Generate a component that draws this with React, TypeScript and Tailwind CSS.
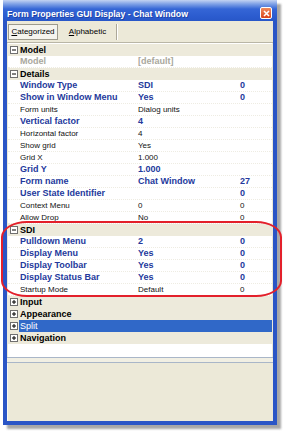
import React from "react";

type Row =
  | { kind: "cat"; label: string; open: boolean; selected?: boolean }
  | { kind: "prop"; name: string; value: string; extra?: string; tone: "blue" | "normal" | "gray" };

const rows: Row[] = [
  { kind: "cat", label: "Model", open: true },
  { kind: "prop", name: "Model", value: "[default]", tone: "gray" },
  { kind: "cat", label: "Details", open: true },
  { kind: "prop", name: "Window Type", value: "SDI", extra: "0", tone: "blue" },
  { kind: "prop", name: "Show in Window Menu", value: "Yes", extra: "0", tone: "blue" },
  { kind: "prop", name: "Form units", value: "Dialog units", tone: "normal" },
  { kind: "prop", name: "Vertical factor", value: "4", tone: "blue" },
  { kind: "prop", name: "Horizontal factor", value: "4", tone: "normal" },
  { kind: "prop", name: "Show grid", value: "Yes", tone: "normal" },
  { kind: "prop", name: "Grid X", value: "1.000", tone: "normal" },
  { kind: "prop", name: "Grid Y", value: "1.000", tone: "blue" },
  { kind: "prop", name: "Form name", value: "Chat Window", extra: "27", tone: "blue" },
  { kind: "prop", name: "User State Identifier", value: "", extra: "0", tone: "blue" },
  { kind: "prop", name: "Context Menu", value: "0", extra: "0", tone: "normal" },
  { kind: "prop", name: "Allow Drop", value: "No", extra: "0", tone: "normal" },
  { kind: "cat", label: "SDI", open: true },
  { kind: "prop", name: "Pulldown Menu", value: "2", extra: "0", tone: "blue" },
  { kind: "prop", name: "Display Menu", value: "Yes", extra: "0", tone: "blue" },
  { kind: "prop", name: "Display Toolbar", value: "Yes", extra: "0", tone: "blue" },
  { kind: "prop", name: "Display Status Bar", value: "Yes", extra: "0", tone: "blue" },
  { kind: "prop", name: "Startup Mode", value: "Default", extra: "0", tone: "normal" },
  { kind: "cat", label: "Input", open: false },
  { kind: "cat", label: "Appearance", open: false },
  { kind: "cat", label: "Split", open: false, selected: true },
  { kind: "cat", label: "Navigation", open: false },
];

function ExpandBox({ open }: { open: boolean }) {
  return (
    <svg width="8" height="8" viewBox="0 0 8 8" className="block">
      <rect x="0.5" y="0.5" width="7" height="7" fill="#ffffff" stroke="#6f6f6f" />
      <line x1="2" y1="4" x2="6" y2="4" stroke="#000" strokeWidth="1" />
      {!open && <line x1="4" y1="2" x2="4" y2="6" stroke="#000" strokeWidth="1" />}
    </svg>
  );
}

function toneClass(t: "blue" | "normal" | "gray") {
  if (t === "blue") return "text-[#24399c] font-bold text-[9px]";
  if (t === "gray") return "text-[#a9a79d] font-bold text-[9px]";
  return "text-[#111111] text-[8px]";
}

export default function App() {
  return (
    <div className="relative w-[283px] h-[435px] bg-white overflow-hidden font-['Liberation_Sans',Arial,sans-serif]">
      <div className="pl-[3px]">
        <div className="w-[274px] h-[425px] flex flex-col bg-[#2a55c6] shadow-[4px_4px_2px_rgba(60,60,60,0.45)]">
          {/* Title bar */}
          <div className="h-[21px] flex items-start justify-between bg-[linear-gradient(to_bottom,#c3d3f2_0px,#7fa1e6_4px,#3566d6_9px,#2c5ccf_16px,#2857c8_21px)]">
            <div className="pl-[4px] pt-[9px] leading-[10px] text-[8.7px] font-bold text-white whitespace-nowrap [text-shadow:1px_1px_0_rgba(20,40,120,0.5)]">
              Form Properties GUI Display - Chat Window
            </div>
            <div className="mt-[7px] mr-[5px] w-[12px] h-[12px] rounded-[2px] border border-white bg-[linear-gradient(to_bottom,#f08a5d,#d9431a)] flex items-center justify-center">
              <svg width="7" height="7" viewBox="0 0 7 7">
                <path d="M1 1 L6 6 M6 1 L1 6" stroke="#fff" strokeWidth="1.6" />
              </svg>
            </div>
          </div>
          {/* Body */}
          <div className="flex-1 mx-[4px] mb-[4px] bg-[#ece9d8] flex flex-col">
            {/* Tabs */}
            <div className="h-[22px] flex items-start pt-[3px] pl-[1px] border-b border-[#b9b6a6] text-[8px] text-black">
              <div className="h-[16px] w-[50px] flex items-center justify-center border border-[#9d9a8c] bg-[#f5f4ee] leading-[10px]">
                <span><span className="underline">C</span>ategorized</span>
              </div>
              <div className="h-[16px] w-[57px] flex items-center justify-center leading-[10px] ml-[1px]">
                <span><span className="underline">A</span>lphabetic</span>
              </div>
              <div className="h-[16px] w-[2px] border-l border-[#aca899] bg-white ml-[0px]" />
            </div>
            {/* Grid */}
            <div className="h-[314px] mx-[1px] pt-[1px] bg-white flex flex-col">
              {rows.map((r, i) =>
                r.kind === "cat" ? (
                  <div key={i} className="h-[12px] flex items-center bg-[#edeadb]">
                    <div className="w-[11px] pl-[2px] flex items-center">
                      <ExpandBox open={r.open} />
                    </div>
                    <div
                      className={
                        "h-[12px] flex-1 leading-[12px] text-[9px] font-bold pl-[1px] " +
                        (r.selected ? "bg-[#3068c8] text-white font-normal" : "text-black")
                      }
                    >
                      {r.label}
                    </div>
                  </div>
                ) : (
                  <div key={i} className="h-[12px] flex items-center border-b border-dotted border-[#eeece2] leading-[11px]">
                    <div className={"w-[130px] pl-[12px] whitespace-nowrap " + toneClass(r.tone)}>{r.name}</div>
                    <div className={"w-[102px] whitespace-nowrap " + toneClass(r.tone)}>{r.value}</div>
                    <div className={"flex-1 whitespace-nowrap " + toneClass(r.tone)}>{r.extra ?? ""}</div>
                  </div>
                )
              )}
            </div>
            {/* Splitter */}
            <div className="h-[6px] border-t border-[#a9b6c8] border-b bg-[#f1efe3]" />
            {/* Description */}
            <div className="flex-1 bg-[#ece9d8] border-l border-[#f7f6f0]" />
          </div>
        </div>
      </div>
      {/* Red annotation oval */}
      <div className="absolute left-[1px] top-[221px] w-[281px] h-[76px] border-2 border-[#e3202b] rounded-[26px/16px] pointer-events-none" />
    </div>
  );
}
